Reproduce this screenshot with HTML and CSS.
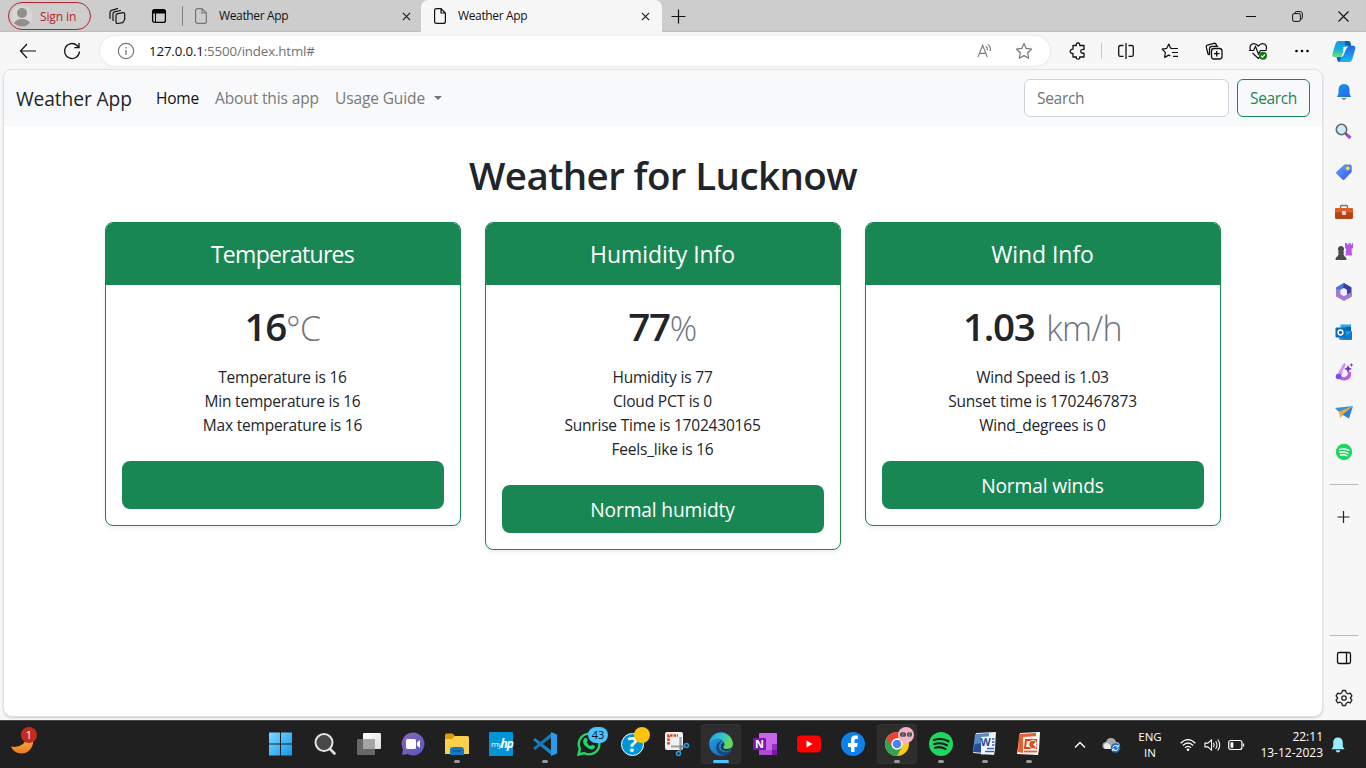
FILE: index.html
```html
<!DOCTYPE html>
<html lang="en">
<head>
<meta charset="utf-8">
<title>Weather App</title>
<link rel="stylesheet" href="styles.css">
</head>
<body>
<div class="screen">
  <div class="tabbar">
    <div class="signin">
      <svg width="22" height="22" viewBox="0 0 22 22"><defs><clipPath id="av"><circle cx="11" cy="11" r="10.5"/></clipPath></defs><circle cx="11" cy="11" r="10.5" fill="#d9d7d3"/><g fill="#918e8a" clip-path="url(#av)"><circle cx="11" cy="8" r="5"/><ellipse cx="11" cy="18.7" rx="8" ry="4.6"/></g></svg>
      <span class="signin-text">Sign in</span>
    </div>
    <svg class="cell" width="18" height="18" viewBox="0 0 18 18" fill="none" stroke="#111" stroke-width="1.2" stroke-linecap="round" stroke-linejoin="round"><path d="M9 6.800l6-1.100q1.700-.2 1.700 1.400v5.400l-2 3.200-5 .8q-1.700.2-1.700-1.400V8.300Q8 7 9 6.800M5 13.500V6.800q0-1.500 1.400-1.900L12.500 3.500M2 11.500V5.400q0-1.500 1.500-2L9.500 1.600"/></svg>
    <svg class="cell" width="16" height="16" viewBox="0 0 16 16"><rect x="1.600" y="1.600" width="12.800" height="12.800" rx="2" fill="none" stroke="#000" stroke-width="1.300"/><path d="M1.500 5.500V3.500q0-2 2-2h9q2 0 2 2v2z"/><path d="M4.500 5v9" stroke="#000"/></svg>
    <i class="tab-rule"></i>
    <div class="tab">
      <svg width="12" height="16" viewBox="0 0 12 16" fill="none" stroke="#777" stroke-width="1.200"><path d="M.6 2.600q0-2 2-2H7l4.400 4.400v8.400q0 2-2 2H2.600q-2 0-2-2zM7 .6V5h4.400"/></svg>
      <span class="tab-title">Weather App</span>
      <svg class="x" width="9" height="9" viewBox="0 0 10 10" stroke="#222" stroke-width="1.400"><path d="M1 1l8 8M9 1l-8 8"/></svg>
    </div>
    <div class="tab tab-active">
      <svg width="12" height="16" viewBox="0 0 12 16" fill="none" stroke="#111" stroke-width="1.200"><path d="M.6 2.600q0-2 2-2H7l4.400 4.400v8.400q0 2-2 2H2.600q-2 0-2-2zM7 .6V5h4.400"/></svg>
      <span class="tab-title">Weather App</span>
      <svg class="x" width="9" height="9" viewBox="0 0 10 10" stroke="#222" stroke-width="1.400"><path d="M1 1l8 8M9 1l-8 8"/></svg>
    </div>
    <svg class="cell" width="15" height="15" viewBox="0 0 15 15" stroke="#111" stroke-width="1.200"><path d="M7.500.5v14M.5 7.500h14"/></svg>
    <span></span>
    <svg class="cell" width="10" height="10" viewBox="0 0 10 10" stroke="#111"><path d="M0 5.500h10"/></svg>
    <svg class="cell" width="11" height="11" viewBox="0 0 11 11" fill="none" stroke="#111"><rect x=".6" y="2.600" width="7.800" height="7.800" rx="1.500"/><path d="M2.800 2.500Q2.800.6 4.600.6H8q2.400 0 2.400 2.400v3.500q0 1.500-1.600 1.800"/></svg>
    <svg class="cell" width="11" height="11" viewBox="0 0 11 11" stroke="#111" stroke-width="1.100"><path d="M.5.5l10 10M10.500.5l-10 10"/></svg>
  </div>

  <div class="toolbar">
    <svg class="cell" width="18" height="16" viewBox="0 0 18 16" fill="none" stroke="#111" stroke-width="1.200"><path d="M8 1L1.500 8 8 15M1.500 8H17"/></svg>
    <svg class="cell" width="18" height="18" viewBox="0 0 18 18" fill="none" stroke="#111" stroke-width="1.300"><path d="M16.500 9.500A7.500 7.500 0 1 1 14.300 3.700L16 5.500M16 1v4.600h-4.600"/></svg>
    <div class="address">
      <svg width="18" height="18" viewBox="0 0 18 18" fill="none" stroke="#777"><circle cx="9" cy="9" r="7.700" stroke-width="1.200"/><path d="M9 8v5M9 5v1.500" stroke-width="1.300"/></svg>
      <span class="url"><b>127.0.0.1</b>:5500/index.html#</span>
      <svg width="16" height="16" viewBox="0 0 17 16" fill="none" stroke="#777" stroke-width="1.200"><path d="M1 14.500L6 2l5 12.500M2.800 10.500h6.500M9.500 3q2 1.500 1.500 4M11.500 1Q15 3.500 14 8.200"/></svg>
      <svg width="18" height="18" viewBox="0 0 18 18" fill="none" stroke="#777" stroke-width="1.200" stroke-linejoin="round"><path d="M9 1.500l2.300 4.900 5.300.7-3.900 3.700 1 5.400L9 13.600l-4.700 2.600 1-5.400L1.400 7.100l5.300-.7z"/></svg>
    </div>
    <svg class="cell puzzle" width="18" height="18" viewBox="0 0 18 18" fill="none" stroke="#111" stroke-width="1.300" stroke-linejoin="round"><path d="M4 3.500h3.300Q7 1 9 1t1.800 2.500H15v4Q11.700 7 11.700 9.300T15 11.200V15h-4.300Q11 17.200 9 17.200T7.300 15H4v-3.500Q1.200 11.500 1.200 9.300T4 7.200z"/></svg>
    <i class="bar-rule"></i>
    <svg class="cell" width="18" height="18" viewBox="0 0 18 18" fill="none" stroke="#111" stroke-width="1.300"><path d="M6.500 3.500H3.300Q1.700 3.500 1.700 5v7.800q0 1.600 1.600 1.600h3.200M9 1v16M11.500 3.500h3.200q1.600 0 1.600 1.500v7.800q0 1.600-1.600 1.600h-3.200"/></svg>
    <svg class="cell" width="18" height="18" viewBox="0 0 18 18" fill="none" stroke="#111" stroke-width="1.200" stroke-linejoin="round"><path d="M10.500 6.200H9.600L7.800 2 5.700 6.300l-4.600.8 3.300 3.400-.8 4.900 4.200-2.300 1.500.8M10 6.500h7M11 10.500h6M12 14.300h5"/></svg>
    <svg class="cell" width="18" height="18" viewBox="0 0 18 18" fill="none" stroke="#111" stroke-width="1.300"><rect x="6.500" y="6.500" width="10.500" height="10.500" rx="2.500"/><path d="M11.700 9v5.500M9 11.700h5.500M4.500 13L3 12 1.300 5.200Q1 3.500 2.500 3L9 1.300q1.700-.4 2.200 1.200l.4 1.800M4.500 12.500V7q0-2.600 2.600-2.600h6.200"/></svg>
    <svg class="cell" width="19" height="18" viewBox="0 0 19 18" fill="none" stroke="#111" stroke-width="1.200"><path d="M1.500 8Q0 4.500 2.700 2.300 6 .5 9.300 4 12.500.5 15.800 2.300 18.500 4.500 17 8M3.500 11l5.800 5.500 2-2M0 8.500h4.500l2-4 3 7.500 2-3.500h6"/><circle cx="14" cy="13.700" r="4" fill="#107c10" stroke="none"/><path d="M12 13.800l1.400 1.300 2.500-2.600" stroke="#fff"/></svg>
    <svg class="cell" width="16" height="4" viewBox="0 0 16 4"><circle cx="2.500" cy="2" r="1.300"/><circle cx="8" cy="2" r="1.300"/><circle cx="13.500" cy="2" r="1.300"/></svg>
    <svg class="cell copilot" width="24" height="23" viewBox="0 0 26 24" preserveAspectRatio="none"><defs><linearGradient id="ca" x2="0" y2="1"><stop stop-color="#1894e8"/><stop offset=".5" stop-color="#12b1d7"/><stop offset="1" stop-color="#74e37b"/></linearGradient><linearGradient id="cb" x2="0" y2="1"><stop stop-color="#2463dc"/><stop offset="1" stop-color="#15b9fb"/></linearGradient></defs><path d="M7 1h10q2.500 0 3.500 5H16l-4 9q-1.500 3-5 3H3q-3.500 0-2.500-4L4 3.500Q5 1 7 1z" fill="url(#ca)"/><path d="M14 1h4q2 0 3 5h-7z" fill="#0b5fa8"/><path d="M18 6h5q3 0 2 4l-3 10q-1 3-4 3H8q-2 0-3-5h3q2.500 0 4-3l3-7q1-2 3-2z" fill="url(#cb)"/><path d="M5 18h5l-2 5q-2 0-3-5z" fill="#214bd8"/><path d="M12.500 7h5.500q-2 .5-3 3l-2.300 5.500q-1 1.800-2.700 2.200l2-4.500z" fill="#fff"/></svg>
  </div>

  <div class="middle">
    <main class="page">
      <nav class="navbar">
        <span class="brand">Weather App</span>
        <span class="link link-on">Home</span>
        <span class="link about">About this app</span>
        <span class="link usage">Usage Guide</span>
        <i class="caret"></i>
        <span class="field">Search</span>
        <span class="search-btn">Search</span>
      </nav>
      <h1 class="heading">Weather for Lucknow</h1>
      <div class="cards">
        <section class="card">
          <h4 class="card-head snug">Temperatures</h4>
          <div class="card-body">
            <div class="big">16<small>°C</small></div>
            <ul class="list"><li>Temperature is 16</li><li>Min temperature is 16</li><li>Max temperature is 16</li></ul>
            <div class="btn"></div>
          </div>
        </section>
        <section class="card">
          <h4 class="card-head">Humidity Info</h4>
          <div class="card-body">
            <div class="big">77<small>%</small></div>
            <ul class="list"><li>Humidity is 77</li><li>Cloud PCT is 0</li><li>Sunrise Time is 1702430165</li><li>Feels_like is 16</li></ul>
            <div class="btn">Normal humidty</div>
          </div>
        </section>
        <section class="card">
          <h4 class="card-head">Wind Info</h4>
          <div class="card-body">
            <div class="big">1.03 <small>km/h</small></div>
            <ul class="list"><li>Wind Speed is 1.03</li><li>Sunset time is 1702467873</li><li>Wind_degrees is 0</li></ul>
            <div class="btn">Normal winds</div>
          </div>
        </section>
      </div>
    </main>

    <aside class="side">
      <svg viewBox="0 0 18 18"><defs><linearGradient id="bl" x2="1" y2="1"><stop stop-color="#159ce5"/><stop offset="1" stop-color="#2763ed"/></linearGradient></defs><path d="M9 1q5.500 0 5.500 6v3.500L16 14H2l1.500-3.500V7Q3.500 1 9 1z" fill="url(#bl)"/><path d="M6.500 15h5q-.5 1.800-2.500 1.800T6.500 15z" fill="#777"/></svg>
      <svg viewBox="0 0 18 18"><path d="M11.500 11.500l4 3.500" stroke="#b33cf0" stroke-width="3"/><path d="M10 10l2 2" stroke="#555" stroke-width="2"/><circle cx="6.500" cy="6.500" r="5.200" fill="#cdeafa" stroke="#66696c" stroke-width="1.600"/></svg>
      <svg viewBox="0 0 18 18"><defs><linearGradient id="tg" x2="1" y2="1"><stop stop-color="#62a9fb"/><stop offset="1" stop-color="#3753ea"/></linearGradient></defs><path d="M9.500 1.500h5.200q2 0 2 2V9L9.500 16.500q-1 1-2 0L1.500 10.800q-1-1 0-2z" fill="url(#tg)"/><circle cx="12.800" cy="5.300" r="1.900" fill="#ffe064" stroke="#dfa426" stroke-width=".6"/></svg>
      <svg viewBox="0 0 18 18"><path d="M5.500 5.500V3.500q0-1 1-1h5q1 0 1 1v2" fill="none" stroke="#777" stroke-width="1.400"/><rect y="5" width="18" height="11" rx="1.500" fill="#b94116"/><path d="M0 6.500Q0 5 1.500 5h15Q18 5 18 6.500v3H0z" fill="#de6026"/><rect x="7" y="8" width="4" height="4" rx="1" fill="#ddd"/></svg>
      <svg viewBox="0 0 18 18"><path d="M10 0h2v1.500h1.500V0h2v1.500H17V0h1v5l-1.500 1 .5 6.500h-6.500l.7-6.500L10 5z" fill="#b558ed"/><path d="M6 3a3 3 0 0 1 1.700 5.500H9.500L8.500 10q.2 3 2.200 4.300.8.800.8 2.700H.5q0-1.900.8-2.700Q3.300 13 3.700 10L2.500 8.500h1.800A3 3 0 0 1 6 3z" fill="#4b4b4b"/></svg>
      <svg viewBox="0 0 18 18"><path d="M8.500 0l7.500 4.300v5l-4-2.500L9 5 5.500 7v4L3 12.500 1 11V4.500z" fill="#4a77d4"/><path d="M9 0l7.500 4.500v9L12 16V7L8 5z" fill="#373fa4"/><path d="M1 6l4.500 1v4L9 13l7.500-4v4.500L9 18l-8-4.500z" fill="#a37ad7"/><path d="M5.500 7L9 5l3 2v4l-3 2-3.500-2z" fill="#eef"/></svg>
      <svg viewBox="0 0 18 18"><path d="M5.500 1.500H16V9H5.500z" fill="#28a8ea"/><path d="M10.500 4H16v4h-5.500z" fill="#0364b8"/><path d="M4 8h13v7.500Q17 17 15.500 17h-10Q4 17 4 15.500z" fill="#209bdc"/><path d="M17 8.500v8H7z" fill="#1478c8"/><rect x=".5" y="4.500" width="10" height="10" rx="1" fill="#086cbe"/><circle cx="5.500" cy="9.500" r="2.400" fill="none" stroke="#fff" stroke-width="1.500"/></svg>
      <svg viewBox="0 0 18 18"><path d="M9.500 1.500L3.500 12" fill="none" stroke="#d78cf8" stroke-width="2.600" stroke-linecap="round"/><path d="M8.500 8L6 12.500q1 2.500 4 1.500 3-1 3-5.500l3 .5q1 8-6.500 8.500-5.500 0-6.500-4z" fill="#bd5cf0"/><circle cx="3.500" cy="13.500" r="2.800" fill="#7052e4"/><path d="M13 2l1.200 2.500L17 6l-2.800 1L13 10l-1.200-3L9 6l2.800-1.500zM16.500 0l.6 1.300 1.300.6-1.300.7-.6 1.300-.6-1.300-1.300-.7 1.300-.6z" fill="#6e37cf"/></svg>
      <svg viewBox="0 0 18 18"><path d="M18 3L0 5l5 5z" fill="#3293e6"/><path d="M18 3L4 8.500 5 15z" fill="#efaa37"/><path d="M18 3l-4 12.500-6.500-3.800z" fill="#2680dc"/></svg>
      <svg viewBox="0 0 18 18"><circle cx="9" cy="9" r="8.200" fill="#1ed760"/><path d="M4.500 6.500q5-1.300 9.300.8M5 9.300q4-1 7.800.8M5.500 12q3.500-.8 6.300.7" fill="none" stroke="#fff" stroke-width="1.500" stroke-linecap="round"/></svg>
      <i class="side-rule"></i>
      <svg class="side-plus" viewBox="0 0 18 18" stroke="#222" stroke-width="1.200"><path d="M8.500 3v12M2.500 9h12"/></svg>
      <i class="side-rule low"></i>
      <svg viewBox="0 0 18 18" fill="none" stroke="#111" stroke-width="1.300"><rect x="2.500" y="3.500" width="13" height="11" rx="1.800"/><path d="M11.500 3.500v11"/></svg>
      <svg viewBox="0 0 18 18" fill="none" stroke="#222" stroke-width="1.300" stroke-linejoin="round"><path d="M7.500 1.500h3l.7 2.300 1.700 1 2.400-.6 1.600 2.700L15.300 9l1.600 2.100-1.600 2.700-2.400-.6-1.700 1-.7 2.300h-3l-.7-2.300-1.700-1-2.400.6-1.600-2.700L2.700 9 1.100 6.900l1.600-2.700 2.400.6 1.700-1z"/><circle cx="9" cy="9" r="2.200"/></svg>
    </aside>
  </div>

  <footer class="taskbar">
    <svg class="weather" width="30" height="32" viewBox="0 0 30 32"><defs><linearGradient id="mo" x2="0" y2="1"><stop stop-color="#f9bd37"/><stop offset="1" stop-color="#ee7b25"/></linearGradient></defs><path d="M22 10q3 6-1 12.500-5 6.500-13 4.500-5-1.700-7-6.500 7 1.500 12-2.500 3-3 3-8z" fill="url(#mo)"/><circle cx="19" cy="9" r="8" fill="#c42b1c"/><text x="19" y="13" fill="#fff" font-size="11" text-anchor="middle">1</text></svg>
    <div class="apps">
      <div class="app"><svg viewBox="0 0 24 24"><defs><linearGradient id="wi" x2="1" y2="1"><stop stop-color="#7fd9fd"/><stop offset="1" stop-color="#1397ef"/></linearGradient></defs><path d="M0 .5h11v11H0zM12 .5h11v11H12zM0 12.500h11v11H0zM12 12.500h11v11H12z" fill="url(#wi)"/></svg></div>
      <div class="app"><svg viewBox="0 0 24 24"><circle cx="11" cy="10.500" r="8.500" fill="#484848" stroke="#e5e5e5" stroke-width="2"/><path d="M17.500 17.500l4 4" stroke="#e0e0e0" stroke-width="2.600" stroke-linecap="round"/></svg></div>
      <div class="app"><svg viewBox="0 0 24 24"><defs><linearGradient id="tv" x2="1" y2="1"><stop stop-color="#fff"/><stop offset="1" stop-color="#ddd"/></linearGradient></defs><rect x="6" y="1" width="18" height="16" rx="1" fill="url(#tv)"/><rect y="7" width="18" height="16" rx="1" fill="#707070" fill-opacity=".9"/><path d="M6 7h12v10H6z" fill="#a5a5a5"/></svg></div>
      <div class="app"><svg viewBox="0 0 24 24"><defs><linearGradient id="ch" x2="1" y2="1"><stop stop-color="#9164b1"/><stop offset="1" stop-color="#5059c9"/></linearGradient></defs><path d="M12 .500a11.500 11.500 0 1 1-5.500 21.600L1 23l1-5.500A11.500 11.500 0 0 1 12 .500z" fill="url(#ch)"/><rect x="5" y="7" width="10" height="10" rx="1.500" fill="#fff"/><path d="M16 10.500L19 8v8l-3-2.500z" fill="#fff"/></svg></div>
      <div class="app running"><svg viewBox="0 0 24 24"><path d="M0 3q0-1.500 1.500-1.500h6L10 4H22v10H0z" fill="#dd9a0b"/><path d="M0 7h7l3-3h12.500Q24 4 24 5.500V22H0z" fill="#fbd04b"/><path d="M5 23v-5q0-3 3-3h8q3 0 3 3v5z" fill="#1676c5"/><path d="M8 19h8" stroke="#0d57a1" stroke-width="1.500"/></svg></div>
      <div class="app"><svg viewBox="0 0 24 24"><rect width="24" height="24" rx="1" fill="#0096d6"/><text x="2" y="14.500" fill="#fff" font-size="8" letter-spacing="-.5">my</text><text x="11.500" y="16" fill="#fff" font-size="12" font-weight="700" font-style="italic" letter-spacing="-1">hp</text></svg></div>
      <div class="app running"><svg viewBox="0 0 24 24"><path d="M0 8l2-2L19 19v4.500z" fill="#1784c8"/><path d="M0 16l2 2L19 5V.5z" fill="#1576b8"/><path d="M18 0l6 2.500v19L18 24z" fill="#2b9ced"/></svg></div>
      <div class="app"><svg viewBox="0 0 24 24"><path d="M1.500 22.500l1.400-5.800A10.300 10.300 0 1 1 7 21z" fill="#202020" stroke="#25d366" stroke-width="2.400"/><path d="M7.200 6.500q2-1.800 2.800.2l.8 2-1.100 1.500q1.200 2.700 4 3.900l1.500-1.400 2.300 1.100q1.300.8-.2 2.500-2.500 2.400-6.800-.5T6.200 10q-.2-2.200 1-3.500z" fill="#25d366"/></svg><span class="badge">43</span></div>
      <div class="app"><svg viewBox="0 0 24 24"><circle cx="11.500" cy="12.500" r="11" fill="#0096d6" stroke="#fff"/><text x="11.500" y="20" fill="#fff" font-size="21" font-weight="700" text-anchor="middle">?</text></svg><i class="dot"></i></div>
      <div class="app"><svg viewBox="0 0 24 24"><rect x="0" y="0" width="18" height="18" rx="2" fill="#eef0f1"/><path d="M3.500 12.500v-9H13" fill="none" stroke="#d9431e" stroke-width="2.600" stroke-dasharray="2.600 .9"/><path d="M15.500 5v9.500H6" fill="none" stroke="#9ba1a6" stroke-width="2.200"/><path d="M15.500 14v4l-1.500 2M15 14.500h4" fill="none" stroke="#777d82" stroke-width="2"/><g fill="none" stroke="#2a9ce0" stroke-width="1.600"><circle cx="21.500" cy="13.500" r="2"/><circle cx="13.500" cy="21.500" r="2"/></g></svg></div>
      <div class="app current"><svg viewBox="0 0 24 24"><defs><linearGradient id="eg" x2="1" y2=".3"><stop stop-color="#249ce4"/><stop offset=".6" stop-color="#35c8c6"/><stop offset="1" stop-color="#68dc48"/></linearGradient><linearGradient id="eb" x2="1" y2="1"><stop stop-color="#2ba0e8"/><stop offset="1" stop-color="#1260ac"/></linearGradient></defs><circle cx="12" cy="12" r="11.800" fill="url(#eb)"/><path d="M14 8q-5 3-4 8 2 6 12 3.500-2 3.500-6.500 4Q8 23 7 16q0-6 7-8z" fill="#114a84"/><path d="M.3 10.500A12 12 0 0 1 24 11.500q-.4 5.500-6.500 5.500-4.500-.3-3.500-2.500 2.500-3 .3-5.500Q11 5.500 6 7 2 8 .3 10.500z" fill="url(#eg)"/><path d="M14.300 14.500q-.8 2 2.700 2.500 3.500.2 5.800-1.500-.3 2.500-4.300 3.200-5.500.5-6.500-3.700 0-3 3-4.500 1.200 2-.7 4z" fill="#2a2d2f"/></svg></div>
      <div class="app"><svg viewBox="0 0 24 24"><rect x="6" y="1" width="18" height="22" rx="1" fill="#ca64ea"/><path d="M19 12h5v11H6v-5h13z" fill="#ae4bd5"/><path d="M19 12h5v5.500h-5z" fill="#9332bf"/><path d="M19 17.500h5V23h-5z" fill="#7719aa"/><rect x="0" y="6" width="13" height="12" rx="1" fill="#7719aa"/><text x="6.500" y="16" fill="#fff" font-size="11" font-weight="700" text-anchor="middle">N</text></svg></div>
      <div class="app"><svg viewBox="0 0 24 24"><rect y="3.500" width="24" height="17" rx="4" fill="#f00"/><path d="M9.500 8.500v7l6-3.500z" fill="#fff"/></svg></div>
      <div class="app"><svg viewBox="0 0 24 24"><circle cx="12" cy="12" r="12" fill="#0c80ec"/><path d="M10 20v-5H7v-4h3V8q0-4.500 4-4.500h2.800V7H15q-1.500 0-1.500 1.500V11h3.200l-.6 4h-2.600v5z" fill="#fff"/></svg></div>
      <div class="app running hover"><svg viewBox="0 0 24 24"><circle cx="12" cy="12" r="12" fill="#fbc916"/><path d="M12 12L1.600 6A12 12 0 0 0 12 24l5-9z" fill="#34a353"/><path d="M1.600 6A12 12 0 0 1 22.400 6H12L7 15z" fill="#e94335"/><circle cx="12" cy="12" r="5" fill="#4285f4" stroke="#fff" stroke-width="1.400"/></svg><i class="face"><i></i><i></i></i></div>
      <div class="app running"><svg viewBox="0 0 24 24"><circle cx="12" cy="12" r="12" fill="#1ed760"/><path d="M4.800 8Q13 5.500 19.500 9.300M5.300 12Q12 10 18 13.200M6 15.700q5.500-1.500 10.500 1.200" fill="none" stroke="#202020" stroke-width="2.200" stroke-linecap="round"/></svg></div>
      <div class="app running"><svg viewBox="0 0 24 24"><path d="M3 1l20-1-1 17-1 6-21-2z" fill="#ebeff8"/><path d="M2 2l14-1v20L0 20z" fill="#5f88c9"/><path d="M2 12l14-2v11L0 20z" fill="#244f9f"/><path d="M8 5l14-1-1 18-13 .5z" fill="#f5f7fc"/><text x="7.500" y="14" font-size="10.500" font-weight="700" fill="#244f9f">W</text><path d="M19 7h2.500M19 10h2.500M19 13h2.500M14 16.500h7M12 19.500h9" stroke="#3566b5" stroke-width="1.500"/></svg></div>
      <div class="app running"><svg viewBox="0 0 24 24"><path d="M3 1l20-1-1 17-1 6-21-1z" fill="#fff"/><path d="M2 2l17-1v4H6v16l-5-1z" fill="#e66032"/><path d="M6 5l15-1v15l-1 3H6z" fill="#faf2ef"/><path d="M9 8h10v8H8z" fill="none" stroke="#d7471a" stroke-width="2"/><circle cx="16" cy="12.500" r="4.200" fill="#d9501f" stroke="#faf2ef"/><path d="M16 12.500l3-2.500v5z" fill="#fff"/><path d="M7 19.500h13" stroke="#e66032" stroke-width="1.800"/></svg></div>
    </div>
    <div class="tray">
      <svg width="12" height="8" viewBox="0 0 12 8" fill="none" stroke="#fff" stroke-width="1.400"><path d="M1 6.500l5-5 5 5"/></svg>
      <svg width="18" height="16" viewBox="0 0 18 16"><path d="M3 12a3.500 3.500 0 0 1 0-7q1-4 5-4t5 4q4 0 4 4t-4 3z" fill="#aaa"/><path d="M2 12q-3-4 1-6 4-1 6 6z" fill="#e9e9e9"/><circle cx="12.500" cy="11" r="4.800" fill="#1672cd"/><path d="M9.700 10.500q1-2.500 3.700-2l1.500 1M15.300 11.500q-1 2.500-3.700 2l-1.500-1M15.300 8v2h-2M9.700 14v-2h2" fill="none" stroke="#fff"/></svg>
      <span class="lang">ENG<br>IN</span>
      <svg width="16" height="14" viewBox="0 0 16 14" fill="none" stroke="#fff" stroke-width="1.200"><path d="M.6 5.200Q8-2 15.400 5.200M2.800 7.500q5.200-5 10.400 0M5 9.700q3-2.700 6 0"/><circle cx="8" cy="11.800" r="1.300" fill="#fff" stroke="none"/></svg>
      <svg width="17" height="14" viewBox="0 0 18 14" fill="none" stroke="#fff" stroke-width="1.100"><path d="M1 5h3l4-3.500v11L4 9H1zM10 4.800q1.600 2.200 0 4.400M12.300 3q3 4 0 8M14.500 1.200q4.400 5.800 0 11.600"/></svg>
      <svg width="17" height="12" viewBox="0 0 17 12" fill="none" stroke="#fff" stroke-width="1.200"><rect x=".7" y="1.500" width="13.200" height="9" rx="2"/><path d="M15.500 4.500v3"/><rect x="2.500" y="3.300" width="2.800" height="5.400" fill="#fff" stroke="none"/></svg>
      <span class="clock">22:11<br>13-12-2023</span>
      <svg width="14" height="16" viewBox="0 0 14 16" fill="#99ebff"><path d="M7 .5q4.800 0 4.800 5.500v3.500l1.700 2.700H.5l1.700-2.700V6Q2.200.5 7 .5zM4.700 13.200h4.600Q9 15.400 7 15.400t-2.300-2.200z"/></svg>
    </div>
  </footer>
</div>
</body>
</html>
```
FILE: styles.css
```css
* { box-sizing: border-box; }
body { margin: 0; font-family: "Open Sans", "Noto Sans", sans-serif; color: #212529; overflow: hidden; }
svg { display: block; overflow: visible; flex: none; }
.screen { width: 1366px; height: 768px; display: grid; grid-template-rows: 32px 37px 651px 48px; background: #f7f7f7; }
.cell { align-self: center; justify-self: center; }

/* tabs */
.tabbar { display: grid; grid-template-columns: 8px 83px 52px 32px 14px 232px 241px 33px 533px 46px 46px 46px; background: #cdcdcd; box-shadow: inset 0 -1px 1px #bcbcbc; }
.signin { grid-column: 2; height: 28px; margin-top: 2px; border: 1px solid #b5232b; border-radius: 14px; display: flex; align-items: center; padding-left: 2px; color: #b5232b; }
.signin-text { font-size: 12px; margin-left: 7px; letter-spacing: -.12px; }
.tab-rule { width: 1px; height: 20px; background: #858585; align-self: center; margin-left: 7px; }
.tab { display: flex; align-items: center; padding: 0 10px 0 6px; }
.tab-title { font-size: 12px; margin-left: 12px; color: #111; letter-spacing: -.36px; flex: 1; padding-bottom: 1px; }
.tab-active { background: #f7f7f7; border-radius: 7px 7px 0 0; padding: 0 12px 0 13px; }

/* toolbar */
.toolbar { display: grid; grid-template-columns: 6px 44px 44px 6px 950px 51px 3px 44px 44px 44px 44px 44px 42px; height: 38px; }
.toolbar > :first-child { grid-column: 2; }
.address { grid-column: 5; margin: 4px 0; height: 30px; background: #fff; border-radius: 15px; display: flex; align-items: center; padding: 0 17px; box-shadow: 0 0 3px #ddd; }
.url { flex: 1; font-size: 13.300px; margin-left: 14px; color: #717171; letter-spacing: -.15px; }
.url b { color: #111; font-weight: 400; }
.address > :last-child { margin-left: 22px; }
.puzzle { margin-left: 4px; }
.bar-rule { width: 1px; height: 16px; background: #c8c8c8; align-self: center; }
.copilot { margin-right: 2px; }

/* viewport and sidebar */
.middle { display: grid; grid-template-columns: 1320px 43px; padding-left: 3px; }
.page { height: 648px; background: #fff; border: 1px solid #e1e1e3; border-radius: 9px; overflow: hidden; box-shadow: 0 1px 2px #ccc; }
.navbar { height: 56px; background: #f8f9fa; display: flex; align-items: center; padding: 0 12px; white-space: nowrap; }
.brand { font-size: 19.200px; width: 140px; letter-spacing: -.1px; }
.link { font-size: 15.500px; color: #797a7b; letter-spacing: -.12px; width: 59px; }
.link-on { color: #111; letter-spacing: -.2px; }
.about { width: 120px; }
.usage { width: 99px; }
.caret { border: 4px solid transparent; border-top-color: #777; border-bottom: 0; }
.field { margin-left: auto; width: 205px; height: 38px; border: 1px solid #ced4da; border-radius: 6px; background: #fff; color: #6c757d; padding: 0 12px; font-size: 15.500px; line-height: 36px; letter-spacing: -.3px; }
.search-btn { margin-left: 8px; width: 73px; height: 38px; border: 1px solid #198754; border-radius: 6px; color: #198754; font-size: 15.500px; line-height: 36px; text-align: center; letter-spacing: -.35px; }
.heading { margin: 25px 0 23px; font-size: 38.500px; line-height: 48px; font-weight: 600; text-align: center; letter-spacing: -.6px; }
.cards { display: grid; grid-template-columns: repeat(3, 356px); gap: 24px; justify-content: center; align-items: start; text-align: center; padding-right: 1px; }
.card { border: 1px solid #198754; border-radius: 8px; box-shadow: 0 2px 4px #00000013; overflow: hidden; }
.card-head { margin: 0; height: 62px; background: #198754; color: #fff; font-size: 23px; line-height: 62px; font-weight: 400; letter-spacing: -.07px; }
.snug { letter-spacing: -.7px; }
.card-body { padding: 16px; }
.big { font-size: 38.500px; height: 48px; line-height: 50px; font-weight: 600; margin-bottom: 16px; white-space: nowrap; letter-spacing: -1.300px; word-spacing: 3px; }
.big small { font-size: 34px; line-height: 1; font-weight: 300; color: #6c757d; letter-spacing: -.6px; }
.list { margin: 0 0 24px; padding: 0; list-style: none; font-size: 15.500px; line-height: 24px; letter-spacing: -.2px; }
.btn { height: 48px; background: #198754; border-radius: 8px; color: #fff; font-size: 19.200px; line-height: 50px; letter-spacing: -.15px; }
.side { display: flex; flex-direction: column; align-items: center; padding: 3px 2px 0 0; }
.side svg { width: 18px; height: 18px; margin: 11px 0; }
.side-rule { width: 28px; height: 1px; background: #bbb; margin: 12px 0; }
.side .side-plus { margin: 11px 0 84px; }
.side-rule.low { margin: 25px 0 2px; }

/* taskbar */
.taskbar { background: #202020; border-top: 1px solid #484848; display: grid; grid-template-columns: 259px 792px 315px; color: #fff; }
.weather { margin: 5px 0 0 10px; }
.apps { display: flex; }
.app { width: 40px; height: 40px; margin: 3px 2px; display: grid; place-items: center; border-radius: 4px; position: relative; }
.app svg { width: 24px; height: 24px; }
.current, .hover { background: #2d2d2d; box-shadow: inset 0 0 0 1px #343434; }
.running::after, .current::after { content: ""; position: absolute; bottom: 1px; left: 17px; width: 6px; height: 3px; border-radius: 2px; background: #999; }
.current::after { left: 12px; width: 16px; background: #4cc2ff; }
.badge { position: absolute; left: 19px; top: 3px; width: 20px; height: 16px; border-radius: 8px; background: #4cc2ff; color: #111; font-size: 11px; line-height: 16px; text-align: center; }
.dot { position: absolute; left: 21px; top: 3px; width: 16px; height: 16px; border-radius: 50%; background: #ffc20e; }
.face { position: absolute; left: 21px; top: 3px; width: 16px; height: 16px; border-radius: 50%; background: #f3b4ca; display: flex; gap: 1px; padding: 5px 2px; }
.face i { width: 6px; height: 5px; border-radius: 50%; background: linear-gradient(90deg, #333, #777 50%, #333); }
.tray { display: grid; grid-template-columns: 40px 24px 52px 24px 24px 24px 75px 30px; align-items: center; justify-items: center; justify-content: start; padding-left: 9px; font-size: 12px; line-height: 16px; }
.lang { text-align: center; font-size: 11.500px; }
.clock { justify-self: end; text-align: right; white-space: nowrap; }
```
